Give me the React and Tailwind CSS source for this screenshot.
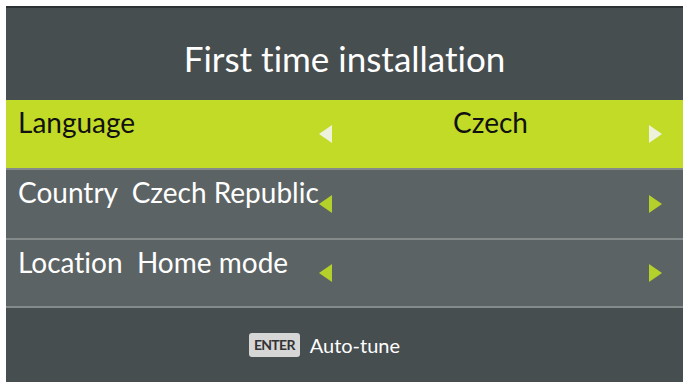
const font = { fontFamily: 'Lato, "Liberation Sans", sans-serif', fontVariantLigatures: 'none' };

function Arrow({ dir, color }) {
  return (
    <svg width="18" height="22" viewBox="0 0 18 22" className="block shrink-0">
      {dir === 'left' ? (
        <polygon points="16,2 16,20 3,11" fill={color} />
      ) : (
        <polygon points="2,2 2,20 15,11" fill={color} />
      )}
    </svg>
  );
}

function Row({ label, value, active, arrowColor, h = 'h-[70px]' }) {
  return (
    <div
      className={`flex ${h} items-center border-b-2 border-[#858b8b] ${
        active ? 'bg-[#c1db27] text-[#111]' : 'bg-[#5c6364] text-white'
      }`}
    >
      <div className="w-[310px] self-start pl-[12px] pt-[5px] text-[28px] leading-[34px] whitespace-pre">
        {label}
      </div>
      <Arrow dir="left" color={arrowColor} />
      <div className="flex-1 self-start pt-[5px] text-center text-[28px] leading-[34px]">{value}</div>
      <Arrow dir="right" color={arrowColor} />
      <div className="w-[18px]" />
    </div>
  );
}

export default function App() {
  return (
    <div className="h-[387px] w-[690px] bg-white pl-[6px] pt-[6px]" style={font}>
      <div className="w-[677px] border-t-2 border-[#2c3133]">
        <div className="flex h-[92px] items-center justify-center bg-[#474e50] pt-[8px] text-[35px] text-white">
          First time installation
        </div>
        <Row label="Language" value="Czech" active arrowColor="#eef2dc" />
        <Row label="Country  Czech Republic" value="" arrowColor="#b3d12a" />
        <Row label="Location  Home mode" value="" arrowColor="#b3d12a" h="h-[68px]" />
        <div className="flex h-[74px] items-center justify-center gap-[10px] bg-[#474e50] pr-[40px]">
          <span className="rounded-[3px] bg-[#d6d6d6] px-[5px] py-[4px] text-[14px] font-bold leading-[16px] tracking-tighter text-[#333]">
            ENTER
          </span>
          <span className="text-[20px] text-white">Auto-tune</span>
        </div>
      </div>
    </div>
  );
}
